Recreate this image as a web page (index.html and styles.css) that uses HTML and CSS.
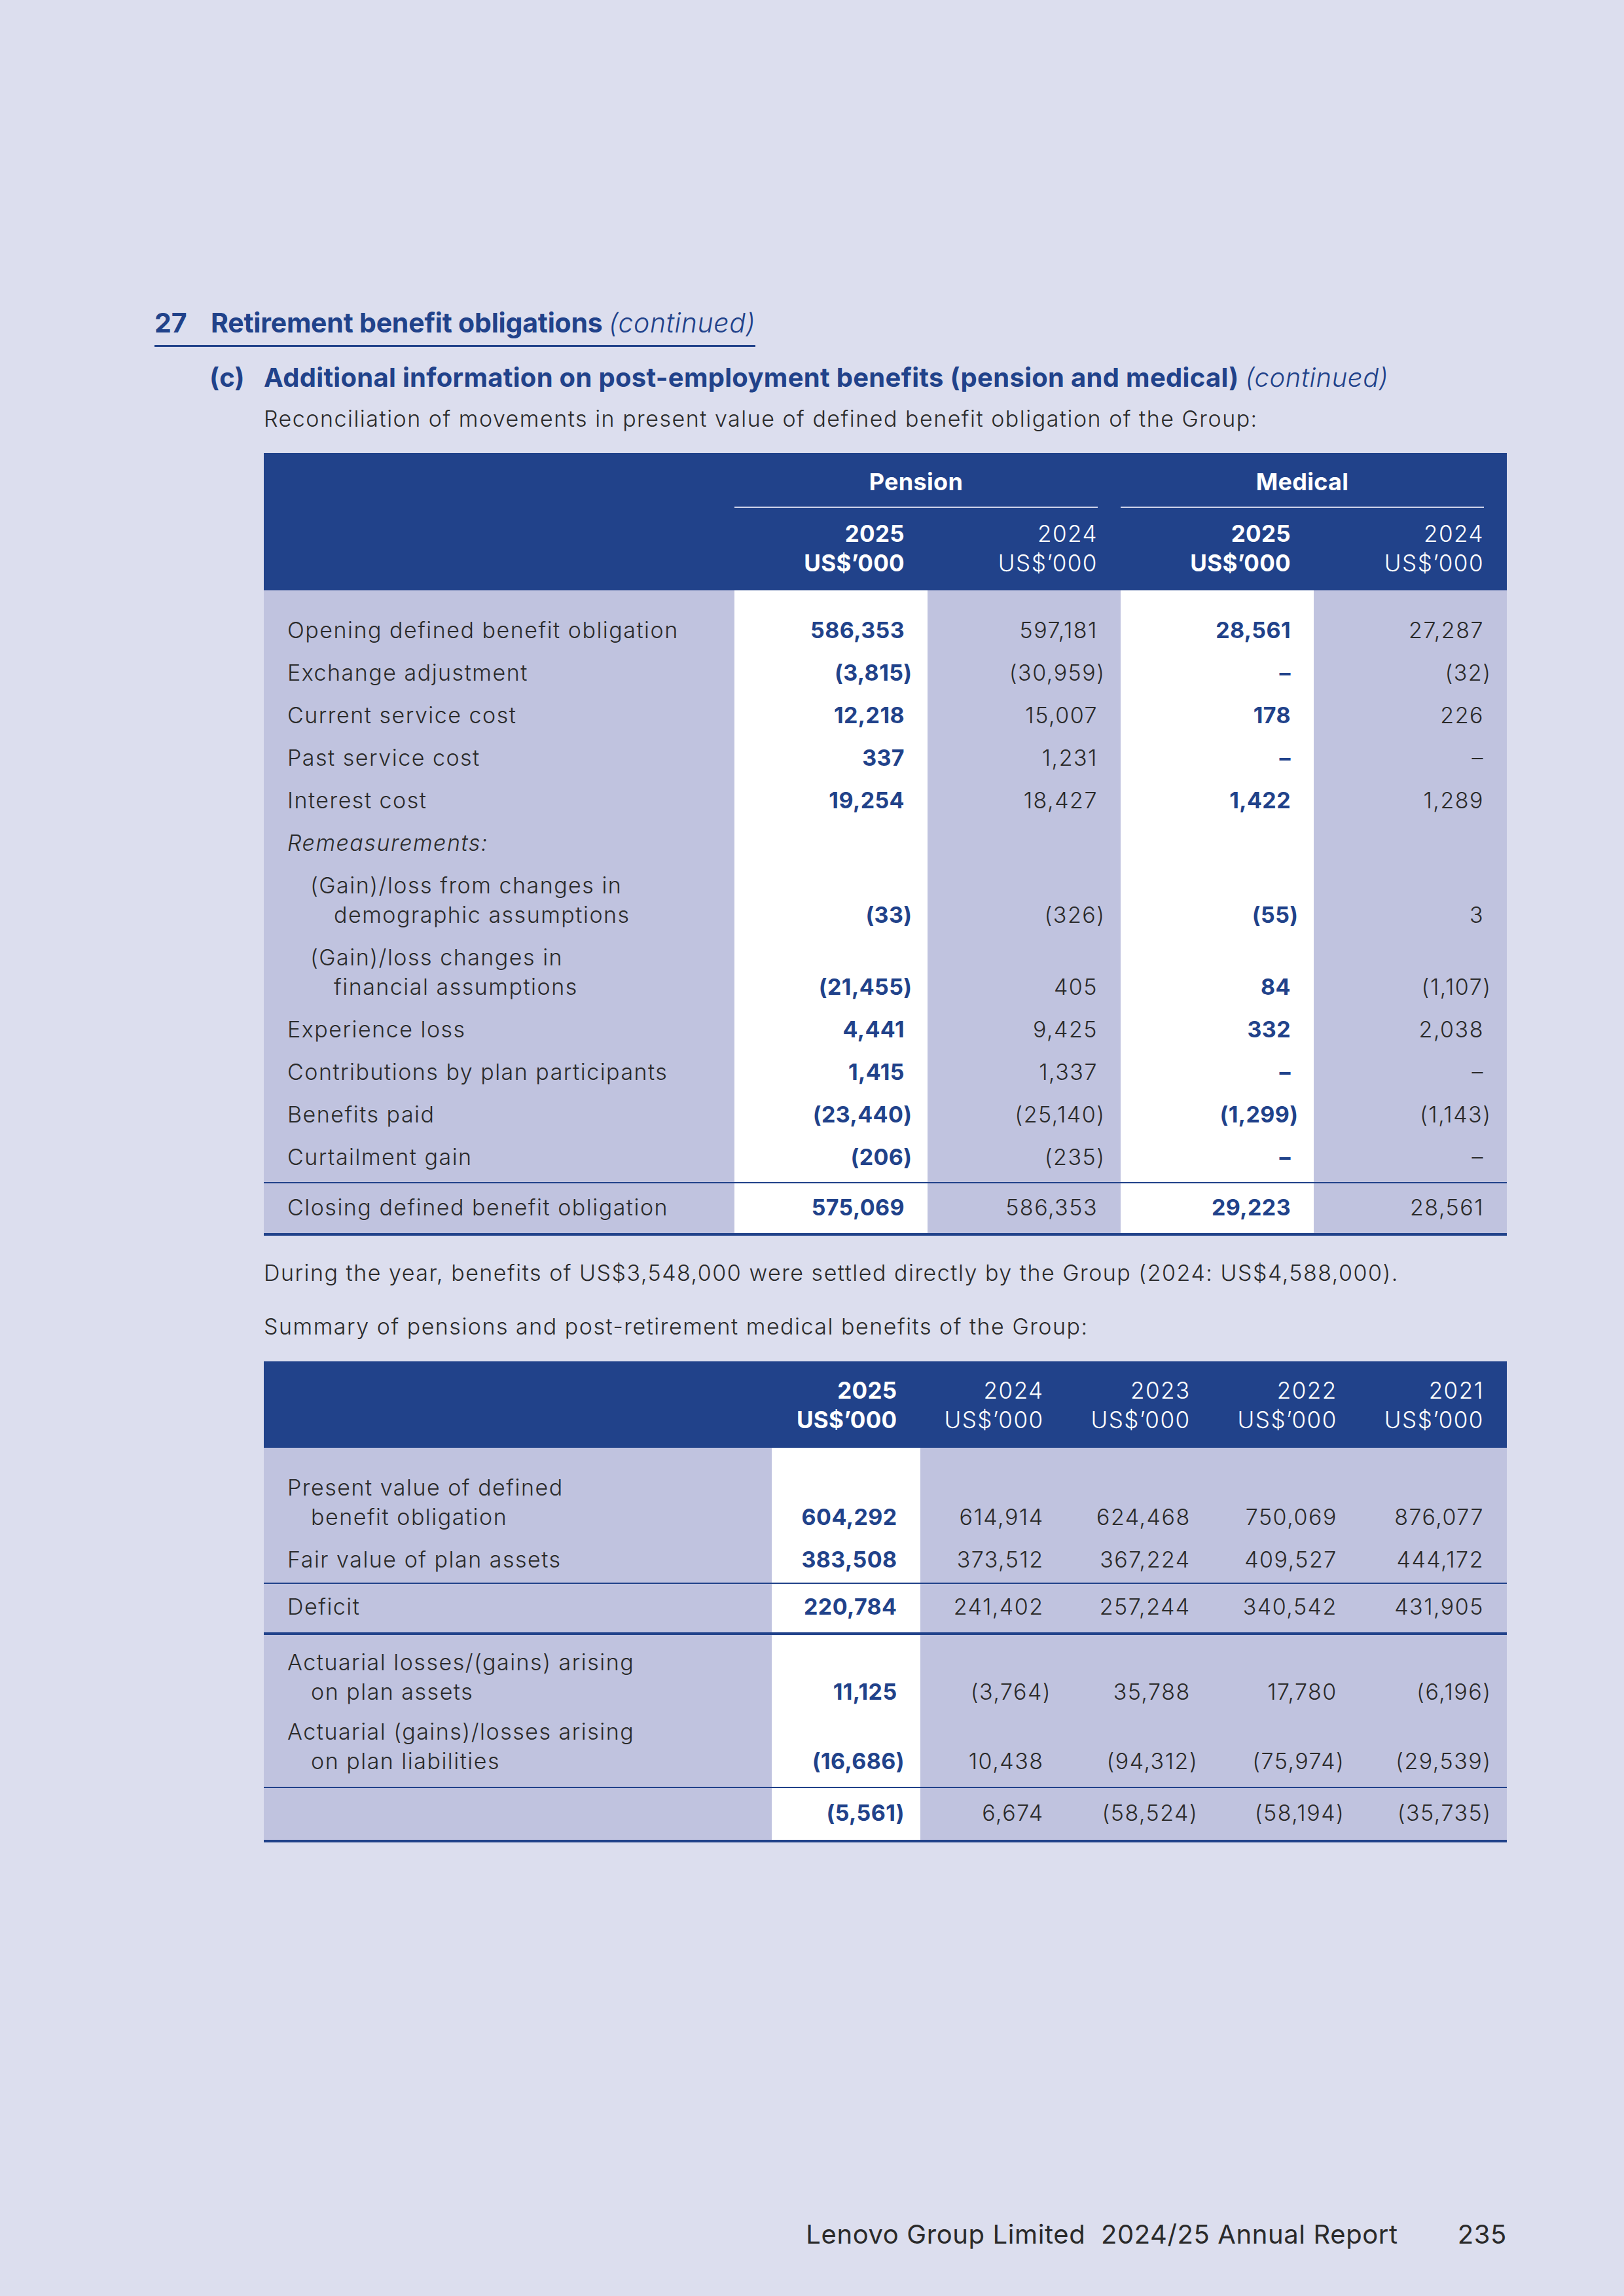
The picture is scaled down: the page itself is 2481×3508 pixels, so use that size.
FILE: index.html
```html
<!DOCTYPE html>
<html lang="en">
<head>
    <meta charset="UTF-8">
    <title>Retirement benefit obligations (continued)</title>
    <link rel="stylesheet" href="styles.css">
</head>
<body>
<div class="page">

    <h1 class="note"><span class="note-no">27</span>Retirement benefit obligations <em>(continued)</em></h1>

    <h2 class="sub"><span class="sub-no">(c)</span>Additional information on post-employment benefits (pension and medical) <em>(continued)</em></h2>

    <div class="content">
        <p class="intro">Reconciliation of movements in present value of defined benefit obligation of the Group:</p>

        <!-- Reconciliation table -->
        <table class="fin recon">
            <colgroup>
                <col class="c-label">
                <col class="c-num"><col class="c-num"><col class="c-num"><col class="c-num">
            </colgroup>
            <thead>
                <tr class="group-row">
                    <th></th>
                    <th colspan="2"><span class="group">Pension</span></th>
                    <th colspan="2"><span class="group">Medical</span></th>
                </tr>
                <tr class="year-row">
                    <th></th>
                    <th class="cur">2025<br>US$’000</th>
                    <th>2024<br>US$’000</th>
                    <th class="cur">2025<br>US$’000</th>
                    <th>2024<br>US$’000</th>
                </tr>
            </thead>
            <tbody>
                <tr class="first">
                    <td>Opening defined benefit obligation</td>
                    <td class="cur">586,353</td><td>597,181</td><td class="cur">28,561</td><td>27,287</td>
                </tr>
                <tr>
                    <td>Exchange adjustment</td>
                    <td class="cur"><span class="neg">(3,815)</span></td><td><span class="neg">(30,959)</span></td><td class="cur">–</td><td><span class="neg">(32)</span></td>
                </tr>
                <tr>
                    <td>Current service cost</td>
                    <td class="cur">12,218</td><td>15,007</td><td class="cur">178</td><td>226</td>
                </tr>
                <tr>
                    <td>Past service cost</td>
                    <td class="cur">337</td><td>1,231</td><td class="cur">–</td><td>–</td>
                </tr>
                <tr>
                    <td>Interest cost</td>
                    <td class="cur">19,254</td><td>18,427</td><td class="cur">1,422</td><td>1,289</td>
                </tr>
                <tr>
                    <td class="italic">Remeasurements:</td>
                    <td class="cur"></td><td></td><td class="cur"></td><td></td>
                </tr>
                <tr>
                    <td class="sub-item">(Gain)/loss from changes in<br>demographic assumptions</td>
                    <td class="cur"><span class="neg">(33)</span></td><td><span class="neg">(326)</span></td><td class="cur"><span class="neg">(55)</span></td><td>3</td>
                </tr>
                <tr>
                    <td class="sub-item">(Gain)/loss changes in<br>financial assumptions</td>
                    <td class="cur"><span class="neg">(21,455)</span></td><td>405</td><td class="cur">84</td><td><span class="neg">(1,107)</span></td>
                </tr>
                <tr>
                    <td>Experience loss</td>
                    <td class="cur">4,441</td><td>9,425</td><td class="cur">332</td><td>2,038</td>
                </tr>
                <tr>
                    <td>Contributions by plan participants</td>
                    <td class="cur">1,415</td><td>1,337</td><td class="cur">–</td><td>–</td>
                </tr>
                <tr>
                    <td>Benefits paid</td>
                    <td class="cur"><span class="neg">(23,440)</span></td><td><span class="neg">(25,140)</span></td><td class="cur"><span class="neg">(1,299)</span></td><td><span class="neg">(1,143)</span></td>
                </tr>
                <tr class="before-rule">
                    <td>Curtailment gain</td>
                    <td class="cur"><span class="neg">(206)</span></td><td><span class="neg">(235)</span></td><td class="cur">–</td><td>–</td>
                </tr>
                <tr class="total">
                    <td>Closing defined benefit obligation</td>
                    <td class="cur">575,069</td><td>586,353</td><td class="cur">29,223</td><td>28,561</td>
                </tr>
            </tbody>
        </table>

        <p class="after-table">During the year, benefits of US$3,548,000 were settled directly by the Group (2024: US$4,588,000).</p>
        <p class="intro">Summary of pensions and post-retirement medical benefits of the Group:</p>

        <!-- Five-year summary table -->
        <table class="fin summary">
            <colgroup>
                <col class="s-label">
                <col class="s-cur">
                <col class="s-num"><col class="s-num"><col class="s-num"><col class="s-num">
            </colgroup>
            <thead>
                <tr class="year-row">
                    <th></th>
                    <th class="cur">2025<br>US$’000</th>
                    <th>2024<br>US$’000</th>
                    <th>2023<br>US$’000</th>
                    <th>2022<br>US$’000</th>
                    <th>2021<br>US$’000</th>
                </tr>
            </thead>
            <tbody>
                <tr class="first">
                    <td class="wrap">Present value of defined<br>benefit obligation</td>
                    <td class="cur">604,292</td><td>614,914</td><td>624,468</td><td>750,069</td><td>876,077</td>
                </tr>
                <tr class="before-rule">
                    <td>Fair value of plan assets</td>
                    <td class="cur">383,508</td><td>373,512</td><td>367,224</td><td>409,527</td><td>444,172</td>
                </tr>
                <tr class="deficit">
                    <td>Deficit</td>
                    <td class="cur">220,784</td><td>241,402</td><td>257,244</td><td>340,542</td><td>431,905</td>
                </tr>
                <tr class="after-thick">
                    <td class="wrap">Actuarial losses/(gains) arising<br>on plan assets</td>
                    <td class="cur">11,125</td><td><span class="neg">(3,764)</span></td><td>35,788</td><td>17,780</td><td><span class="neg">(6,196)</span></td>
                </tr>
                <tr class="last-item">
                    <td class="wrap">Actuarial (gains)/losses arising<br>on plan liabilities</td>
                    <td class="cur"><span class="neg">(16,686)</span></td><td>10,438</td><td><span class="neg">(94,312)</span></td><td><span class="neg">(75,974)</span></td><td><span class="neg">(29,539)</span></td>
                </tr>
                <tr class="total">
                    <td></td>
                    <td class="cur"><span class="neg">(5,561)</span></td><td>6,674</td><td><span class="neg">(58,524)</span></td><td><span class="neg">(58,194)</span></td><td><span class="neg">(35,735)</span></td>
                </tr>
            </tbody>
        </table>
    </div>

    <footer class="folio">
        <span>Lenovo Group Limited&nbsp; 2024/25 Annual Report</span>
        <span class="page-no">235</span>
    </footer>
</div>
</body>
</html>
```

FILE: styles.css
```css
body {
    margin: 0;
    background-color: #dcdeee;
    font-family: Inter, "Liberation Sans", sans-serif;
    font-weight: 300;
    color: #2a2a2a;
    letter-spacing: 1.5px;
}

.page {
    min-height: 3508px;
    box-sizing: border-box;
    padding: 468px 179px 0 236px;
    display: flex;
    flex-direction: column;
}

/* Headings */
.note {
    align-self: flex-start;
    margin: 0;
    padding-bottom: 9px;
    border-bottom: 3px solid #21428a;
    font-size: 41px;
    line-height: 50px;
    font-weight: 700;
    color: #21428a;
    letter-spacing: -0.2px;
}

.note-no {
    display: inline-block;
    width: 86px;
}

.note em,
.sub em {
    font-weight: 300;
    font-style: italic;
    letter-spacing: 0.6px;
}

.sub {
    margin: 23px 0 0 84px;
    font-size: 40px;
    line-height: 48px;
    font-weight: 700;
    color: #21428a;
    letter-spacing: 0.3px;
}

.sub-no {
    display: inline-block;
    width: 83px;
}

/* Body copy */
.content {
    margin-left: 167px;
    width: 1899px;
}

.content p {
    font-size: 34px;
    line-height: 45px;
    margin: 0;
}

.intro {
    margin-top: 16px !important;
    margin-bottom: 30px !important;
}

.after-table {
    margin-top: 34px !important;
}

.after-table + .intro {
    margin-top: 37px !important;
    margin-bottom: 31px !important;
}

/* Financial tables */
.fin {
    width: 1899px;
    table-layout: fixed;
    border-collapse: collapse;
    font-size: 34px;
    line-height: 45px;
}

.c-label { width: 719px; }
.c-num { width: 295px; }
.s-label { width: 776px; }
.s-cur { width: 226px; }
.s-num { width: 224px; }

.fin thead th {
    background-color: #21428a;
    color: #fff;
    font-weight: 300;
    text-align: right;
    padding: 0 35px 0 0;
    vertical-align: bottom;
    font-size: 35px;
}

.fin thead th.cur {
    font-weight: 700;
    letter-spacing: 0.3px;
}

.group-row th {
    padding: 22px 0 0 0 !important;
}

.group-row th[colspan] {
    text-align: center;
}

.group {
    display: block;
    margin-right: 35px;
    padding-bottom: 15px;
    border-bottom: 2px solid #cfd3ea;
    font-size: 36px;
    font-weight: 700;
    letter-spacing: 0.3px;
}

.recon .year-row th {
    padding-top: 17px;
    padding-bottom: 19px;
}

.summary .year-row th {
    padding-top: 22px;
    padding-bottom: 20px;
}

.fin tbody td {
    background-color: #c0c3df;
    text-align: right;
    vertical-align: bottom;
    padding: 10px 35px 10px 0;
    white-space: nowrap;
}

.fin tbody td:first-child {
    text-align: left;
    padding-left: 36px;
    padding-right: 0;
}

.fin tbody td.cur {
    background-color: #fff;
    color: #21428a;
    font-weight: 700;
    letter-spacing: 0.4px;
}

.italic {
    font-style: italic;
}

.sub-item {
    padding-left: 107px !important;
    text-indent: -36px;
}

.wrap {
    padding-left: 72px !important;
    text-indent: -36px;
}

.neg {
    margin-right: -0.34em;
}

.fin tr.first td {
    padding-top: 38px;
}

.fin tr.before-rule td {
    padding-bottom: 16px;
}

.recon tr.total td {
    border-top: 2px solid #21428a;
    border-bottom: 4px solid #21428a;
    padding-top: 14px;
    padding-bottom: 17px;
}

.summary tr.before-rule td {
    padding-bottom: 13px;
}

.summary tr.deficit td {
    border-top: 2px solid #21428a;
    border-bottom: 4px solid #21428a;
    padding-top: 12px;
    padding-bottom: 17px;
}

.summary tr.after-thick td {
    padding-top: 19px;
}

.summary tr.last-item td {
    padding-top: 6px;
    padding-bottom: 17px;
}

.summary tr.total td {
    border-top: 2px solid #21428a;
    border-bottom: 4px solid #21428a;
    padding-top: 15px;
    padding-bottom: 19px;
}

/* Folio */
.folio {
    margin-top: auto;
    padding-bottom: 70px;
    display: flex;
    justify-content: flex-end;
    gap: 91px;
    font-size: 40px;
    line-height: 48px;
    font-weight: 400;
    color: #2a2a2a;
    letter-spacing: 0.6px;
}
```
